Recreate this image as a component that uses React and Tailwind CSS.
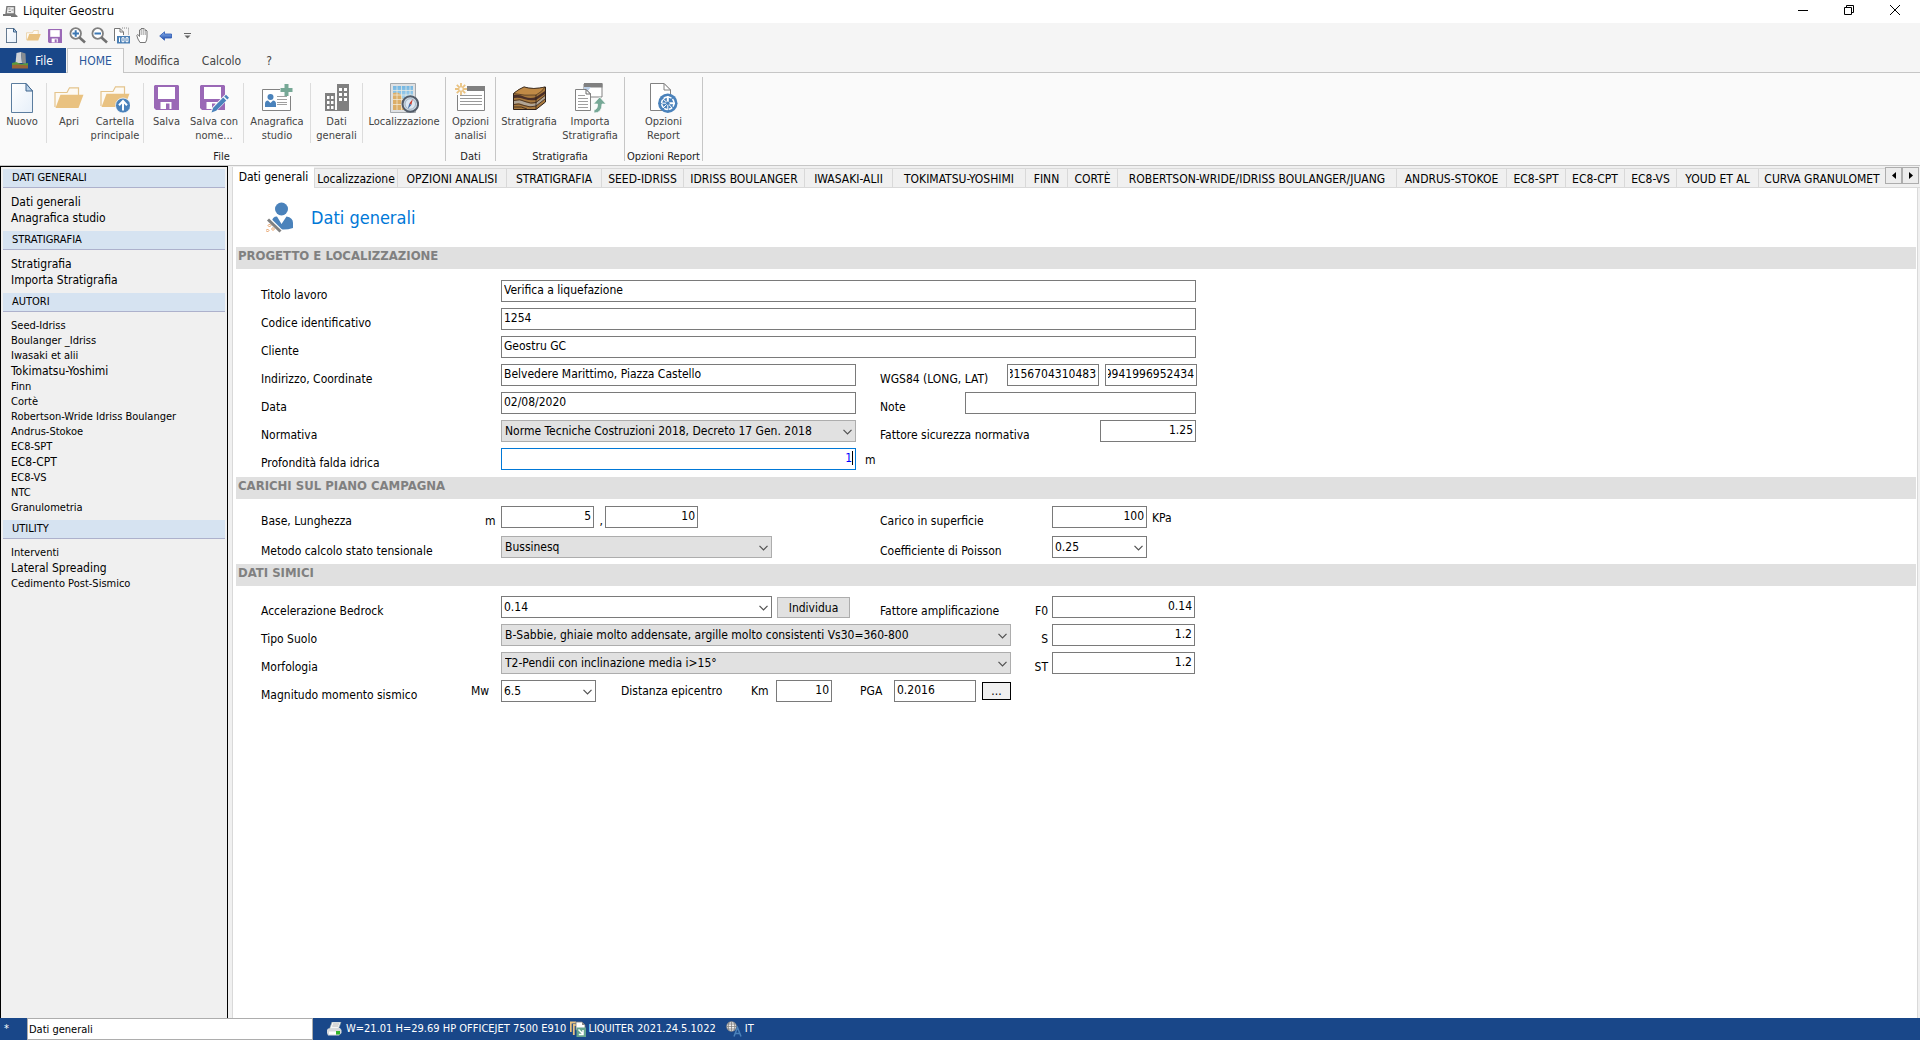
import React from 'react';

/* ---------- icons ---------- */

const PageIcon = ({ className, stroke = 1, edge = '#5b7d9f' }) => (
  <svg viewBox="0 0 22 30" className={className} aria-hidden="true">
    <defs>
      <linearGradient id="pg" x1="0" y1="0" x2="1" y2="1">
        <stop offset="0" stopColor="#ffffff" />
        <stop offset="1" stopColor="#e6eff9" />
      </linearGradient>
    </defs>
    <path d="M.5 .5H15L21.500 8V29.500H.5Z" fill="url(#pg)" stroke={edge} strokeWidth={stroke} />
    <path d="M15 .5V8H21.500Z" fill="#b9d2ea" stroke="#3f648c" strokeWidth={stroke} />
  </svg>
);

const FolderShape = () => (
  <>
    <path d="M1 20V5.500H13L15.500 .8H24.500V8" fill="#fdfaf4" stroke="#e4c48c" strokeWidth="1.200" />
    <path d="M1.500 21L6.500 7.800H29.500L24.500 21Z" fill="#e9c281" />
  </>
);

const FolderIcon = ({ className }) => (
  <svg viewBox="0 0 30 22" className={className} aria-hidden="true"><FolderShape /></svg>
);

const FolderUpIcon = () => (
  <svg viewBox="0 0 30 27" className="h-[27px] w-[30px]" aria-hidden="true">
    <FolderShape />
    <circle cx="23" cy="19.500" r="7.500" fill="#4a82bb" stroke="#fafafa" strokeWidth=".8" />
    <path d="M23 24.500V16M19 19.200L23 15L27 19.200" fill="none" stroke="#fff" strokeWidth="2" />
  </svg>
);

const DiskShape = () => (
  <>
    <path d="M1 0H24L25 1V25H2L0 23V1Z" fill="#9a68b6" />
    <path d="M4 2H21V14H4Z" fill="#fff" />
    <path d="M6.500 17H17.500V24H6.500Z" fill="#fff" />
    <path d="M12 18.500H15.500V24H12Z" fill="#9a68b6" />
  </>
);

const DiskIcon = ({ className }) => (
  <svg viewBox="0 0 25 25" className={className} aria-hidden="true"><DiskShape /></svg>
);

const DiskPenIcon = () => (
  <svg viewBox="0 0 29 28" className="h-[28px] w-[29px]" aria-hidden="true">
    <DiskShape />
    <path d="M10 28L12.500 22L25 9.500L29 13.500L16.500 26Z" fill="#fafafa" />
    <path d="M11.500 27.500L13.200 22.800L23.200 12.500L26.300 15.500L16.200 25.800Z" fill="#4a82bb" />
    <path d="M24.200 11.500L26 9.800L29 12.800L27.300 14.500Z" fill="#4a82bb" />
  </svg>
);

const CardIcon = () => (
  <svg viewBox="0 0 31 28" className="h-[28px] w-[31px]" aria-hidden="true">
    <path d="M.5 5.500H28.500V26.500H.5Z" fill="#fff" stroke="#828282" />
    <path d="M18 0H31V12H18Z" fill="#fafafa" />
    <circle cx="8.500" cy="13" r="3" fill="#4a82bb" />
    <path d="M3 23V20Q3 16.500 6 16.500L8.500 19L11 16.500Q14 16.500 14 20V23Z" fill="#4a82bb" />
    <path d="M15 12.500H25M15 15.500H25M15 18.500H25M15 20.500H25" stroke="#a0a0a0" />
    <path d="M22.500 0H26.500V4H30.500V8H26.500V12H22.500V8H18.500V4H22.500Z" fill="#76a896" />
  </svg>
);

const BuildingsIcon = () => (
  <svg viewBox="0 0 24 27" className="h-[27px] w-[24px]" aria-hidden="true">
    <path d="M0 9H10V27H0ZM12 0H24V27H12Z" fill="#808080" />
    <path d="M10 26H12V27H10Z" fill="#808080" />
    <path d="M2 12H4.500V15H2ZM6 12H8.500V15H6ZM2 17H4.500V20H2ZM6 17H8.500V20H6ZM2 22H4.500V25H2ZM6 22H8.500V25H6ZM14 4H17V7H14ZM19 4H22V7H19ZM14 9H17V12H14ZM19 9H22V12H19ZM14 14H17V17H14ZM19 14H22V17H19Z" fill="#fff" />
  </svg>
);

const MapIcon = () => (
  <svg viewBox="0 0 29 30" className="h-[30px] w-[29px]" aria-hidden="true">
    <defs>
      <linearGradient id="sky" x1="0" y1="0" x2="0" y2="1">
        <stop offset="0" stopColor="#74b6e2" />
        <stop offset="1" stopColor="#d4ecf8" />
      </linearGradient>
    </defs>
    <path d="M.5 .5H25.500V29.500H.5Z" fill="#dfe1e3" stroke="#a5a9ad" />
    <path d="M3 3H23V27H3Z" fill="url(#sky)" />
    <path d="M3 10Q10 8 12 14Q13 19 17 20L16 27H3Z" fill="#dcae68" />
    <path d="M7 3V27M11.500 3V27M16 3V27M20 3V27M3 7.500H23M3 12H23M3 16.500H23M3 21.500H23" stroke="#f4efe2" strokeWidth=".7" />
    <circle cx="20.300" cy="21" r="7.800" fill="#c9d6e2" stroke="#535c69" strokeWidth="2" />
    <circle cx="20.300" cy="21" r="5.200" fill="#dce8f2" stroke="#8d9cab" strokeWidth=".6" />
    <path d="M22.800 16L21.300 22L19.300 20.500Z" fill="#cf3c2c" />
    <path d="M17.800 26L19.300 20.500L21.300 22Z" fill="#456ea3" />
  </svg>
);

const OptionsIcon = () => (
  <svg viewBox="0 0 31 29" className="h-[29px] w-[31px]" aria-hidden="true">
    <path d="M2.500 5.500H29.500V27.500H2.500Z" fill="#fff" stroke="#828282" />
    <path d="M12 3H30V8H12Z" fill="#808080" />
    <path d="M0 0H12V12H0Z" fill="#fafafa" />
    <path d="M5 12.500H27M5 15.500H27M5 18.500H27M5 21.500H27" stroke="#9a9a9a" />
    <path d="M6 0V12M0 6H12M1.800 1.800L10.200 10.200M10.200 1.800L1.800 10.200" stroke="#e9c281" strokeWidth="1.800" />
    <circle cx="6" cy="6" r="2.200" fill="#fafafa" stroke="#e9c281" />
  </svg>
);

const StrataIcon = () => (
  <svg viewBox="0 0 33 24" className="h-[24px] w-[33px]" aria-hidden="true">
    <path d="M.5 7.500Q6 3 11 1Q20 4 32.500 1V16L23 23.500H.5Z" fill="#a8793d" stroke="#2e211a" />
    <path d="M.5 7.500Q6 3 11 1Q20 4 32 1Q29 6 23 9Q12 10 .5 7.500Z" fill="#c08a46" stroke="#2e211a" strokeWidth=".6" />
    <path d="M1 9Q6 8 12 11Q18 13 23 11L32 5V8L23 14Q17 15 11 13Q6 11 1 12Z" fill="#4a2f28" />
    <path d="M1 15Q7 13 12 16Q18 19 23 17L32 10V13L23 20Q17 21 11 19Q6 16 1 18Z" fill="#b0a596" />
    <path d="M1 14.500Q7 12.500 12 15.500Q18 18 23 16.500L32 9.500M1 18.500Q6 17 11 19.500Q17 22 23 20L32 13" fill="none" stroke="#3a2820" strokeWidth=".8" />
    <path d="M1 21Q9 20 14 23M23 9V23" fill="none" stroke="#2e211a" strokeWidth=".8" />
  </svg>
);

const ImportIcon = () => (
  <svg viewBox="0 0 31 31" className="h-[31px] w-[31px]" aria-hidden="true">
    <path d="M9 2H27V15H9Z" fill="#fff" stroke="#828282" />
    <path d="M9 1H27.500V5.500H9Z" fill="#808080" />
    <path d="M9 5H16L12 10H9Z" fill="#bcd0e8" />
    <path d="M.5 7.500H11L15.500 12V28.500H.5Z" fill="#fff" stroke="#828282" />
    <path d="M11 7.500V12H15.500Z" fill="#fff" stroke="#6a6a6a" />
    <path d="M3 13.500H10M3 16.500H13M3 19.500H13M3 22.500H13M3 25.500H13" stroke="#a0a0a0" />
    <path d="M19 31V28Q23 27 22.500 22H18.500L24.700 15L31 22H27Q27 31 19 31Z" fill="#76a896" stroke="#fafafa" strokeWidth=".7" />
  </svg>
);

const ReportIcon = () => (
  <svg viewBox="0 0 28 30" className="h-[30px] w-[28px]" aria-hidden="true">
    <path d="M.5 .5H14L20.500 7V27.500H.5Z" fill="#fff" stroke="#828282" />
    <path d="M14 .5V7H20.500Z" fill="#fff" stroke="#828282" />
    <circle cx="17.800" cy="20.200" r="9.700" fill="#4a82bb" />
    <circle cx="17.800" cy="20.200" r="6.200" fill="none" stroke="#fff" strokeWidth="1.500" strokeDasharray="3.600 1.200" />
    <path d="M17.800 13V20.200H25" fill="none" stroke="#fff" strokeWidth="2" />
    <path d="M17.800 20.200L13 25M17.800 20.200L22 25M17.800 20.200H11.500M17.800 20.200V27M17.800 20.200L13 16" stroke="#fff" strokeWidth="1" />
    <circle cx="17.800" cy="20.200" r="1.800" fill="#4a82bb" />
  </svg>
);

const ZoomIcon = ({ plus }) => (
  <svg viewBox="0 0 17 17" className="h-[17px] w-[17px]" aria-hidden="true">
    <circle cx="6.700" cy="6.500" r="5.300" fill="#fff" stroke="#808080" strokeWidth="1.800" />
    <path d="M10.500 10.500L16 15.500" stroke="#707070" strokeWidth="2.600" />
    <path d={plus ? 'M3.500 6.500H10M6.700 3.300V9.700' : 'M3.500 6.500H10'} stroke="#3d78b4" strokeWidth="2" />
  </svg>
);

const HundredIcon = () => (
  <svg viewBox="0 0 17 17" className="h-[17px] w-[17px]" aria-hidden="true">
    <path d="M1.500 14V1.500H7L10.500 5V8" fill="#fff" stroke="#777" />
    <path d="M7 1.500V5H10.500" fill="none" stroke="#777" />
    <path d="M9 1H15.500V8" fill="none" stroke="#888" strokeDasharray="1 1" />
    <path d="M4 9H17V16.500H4Z" fill="#4a7fb5" />
    <path d="M6.500 10.500V15M9 10.700H11V14.700H9ZM13 10.700H15V14.700H13Z" fill="none" stroke="#fff" />
  </svg>
);

const HandIcon = () => (
  <svg viewBox="0 0 14 17" className="h-[17px] w-[14px]" aria-hidden="true">
    <path d="M4 15.500Q1.500 12 .8 8.500Q1.200 7 2.500 8L3.500 9.500V3Q4.200 1.800 5 3V2Q6 0 7 2V1.800Q8 .5 9 2.500V3.500Q10 2.200 11 4V10Q11 13 9.500 15.500Z" fill="#fff" stroke="#777" />
    <path d="M5.200 3V8M7.200 2V8M9.200 3.500V8" stroke="#888" strokeWidth=".8" />
  </svg>
);

const BackIcon = () => (
  <svg viewBox="0 0 13 10" className="h-[10px] w-[13px]" aria-hidden="true">
    <defs>
      <linearGradient id="bk" x1="0" y1="0" x2="0" y2="1">
        <stop offset="0" stopColor="#8fb8f2" />
        <stop offset="1" stopColor="#1c48a8" />
      </linearGradient>
    </defs>
    <path d="M.7 5L5.500 .8V3H12.500V7H5.500V9.200Z" fill="url(#bk)" stroke="#2c59b4" strokeWidth=".8" />
  </svg>
);

const AppIcon = () => (
  <svg viewBox="0 0 15 11" className="h-[11px] w-[15px]" aria-hidden="true">
    <path d="M4 .5H11.500V8H3Z" fill="#eee" stroke="#777" strokeWidth="1.400" />
    <path d="M5.500 3H7.500M8.500 4H10.500M5.500 5.500H8" stroke="#888" />
    <path d="M0 8H12L14.500 10V11H8V10H0Z" fill="#777" />
  </svg>
);

const FileIcon = () => (
  <svg viewBox="0 0 16 17" className="h-[17px] w-[16px]" aria-hidden="true">
    <path d="M4.500 1L9 0L10 11H3.500Z" fill="#d0d3d6" />
    <path d="M9 0L13.500 1.500L14 12L10 11Z" fill="#868c92" />
    <path d="M0 11L4 10L9 12L16 11V14H0Z" fill="#5c9a3d" />
    <path d="M0 13L6 12.500L16 13.500V16.500H0Z" fill="#9a6538" />
  </svg>
);

const UserWandIcon = () => (
  <svg viewBox="0 0 28 31" className="h-[31px] w-[28px]" aria-hidden="true">
    <circle cx="15.500" cy="7" r="6.500" fill="#4a82bb" />
    <path d="M6 25V20Q6 14.500 11 14.500L15.500 22L20.500 14.500Q27 15.500 27 21V26Q21 28 15.500 27.500Z" fill="#4a82bb" />
    <path d="M2 17L15 30" stroke="#fff" strokeWidth="5" />
    <path d="M2 17.500L14.500 29.500" stroke="#808080" strokeWidth="3" />
    <path d="M3.500 22L5 23.500L3.500 25L2 23.500ZM7 25.500L8.500 27L7 28.500L5.500 27ZM1.500 27L3 28.500L1.500 30L0 28.500Z" fill="#fff" stroke="#e0863c" strokeWidth=".8" />
  </svg>
);

const PrinterIcon = () => (
  <svg viewBox="0 0 15 14" className="h-[14px] w-[15px]" aria-hidden="true">
    <path d="M5 0H14L11.500 7H2.500Z" fill="#f6f6f6" stroke="#9aa" strokeWidth=".6" />
    <path d="M6 2H12M5.300 4H11.300" stroke="#aaa" strokeWidth=".8" />
    <path d="M1 6.500L13 6L14.500 8V11L12 13.500H1L0 11V8Z" fill="#d8dadc" />
    <path d="M2 9.500H9V12.500H2Z" fill="#fff" />
    <path d="M9 9H13V12.500H9Z" fill="#35b52c" />
  </svg>
);

const VersionIcon = () => (
  <svg viewBox="0 0 16 16" className="h-[16px] w-[16px]" aria-hidden="true">
    <path d="M.8 11V1.500H6M3.800 14V4H8" fill="none" stroke="#e9c281" strokeWidth="1.800" />
    <path d="M6 1H12L15 4V9H6Z" fill="#fff" stroke="#777" strokeWidth=".8" />
    <path d="M12 1V4H15Z" fill="#888" />
    <path d="M6.500 6.500H16V16H6.500Z" fill="#66a58f" />
    <path d="M8.500 8.500L13 13M13 9V13.500H8.800" fill="none" stroke="#fff" strokeWidth="1.500" />
  </svg>
);

const GlobeIcon = () => (
  <svg viewBox="0 0 16 16" className="h-[16px] w-[16px]" aria-hidden="true">
    <circle cx="5.500" cy="5.500" r="4.800" fill="#f0f0f0" stroke="#888" strokeWidth=".8" />
    <path d="M5.500 .5V10.500M.5 5.500H10.500M1.500 3H9.500M1.500 8H9.500M3 1Q1.500 5.500 3 10M8 1Q9.500 5.500 8 10" fill="none" stroke="#777" strokeWidth=".7" />
    <path d="M8 15.500L11.500 6.500L15 15.500M9.500 12.500H13.500" fill="none" stroke="#4a82bb" strokeWidth="1.500" />
  </svg>
);

/* ---------- ribbon ---------- */

const QUICK = [
  ['Nuovo', <PageIcon className="h-[15px] w-[11px]" stroke={2} edge="#34506e" />],
  ['Apri', <FolderIcon className="h-[11px] w-[15px]" />],
  ['Salva', <DiskIcon className="h-[14px] w-[14px]" />],
  ['Zoom avanti', <ZoomIcon plus />],
  ['Zoom indietro', <ZoomIcon />],
  ['Zoom 100', <HundredIcon />],
  ['Sposta', <HandIcon />],
  ['Indietro', <BackIcon />],
];

const RibbonButton = ({ icon, lines, width }) => (
  <button type="button" className={`flex flex-col items-center text-[11px] leading-[14px] text-[#444] ${width}`}>
    <span className="flex h-[35px] items-center justify-center">{icon}</span>
    {lines.map((l) => <span key={l} className="whitespace-nowrap">{l}</span>)}
  </button>
);

const Divider = () => <span className="mx-[2px] mt-[3px] h-[60px] w-px shrink-0 bg-[#dcdcdc]" />;

const RibbonGroup = ({ title, children, className = '' }) => (
  <section className={`flex shrink-0 flex-col border-r border-[#c6c6c6] pt-[3px] ${className}`}>
    <div className="flex h-[70px] shrink-0 items-start">{children}</div>
    <h2 className="text-center text-[11px] leading-[14px] whitespace-nowrap text-[#222]">{title}</h2>
  </section>
);

/* ---------- sidebar ---------- */

const NAV = [
  ['DATI GENERALI', [['Dati generali', 1], ['Anagrafica studio', 1]]],
  ['STRATIGRAFIA', [['Stratigrafia', 1], ['Importa Stratigrafia', 1]]],
  ['AUTORI', [
    ['Seed-Idriss'], ['Boulanger _Idriss'], ['Iwasaki et alii'], ['Tokimatsu-Yoshimi', 1], ['Finn'], ['Cortè'],
    ['Robertson-Wride Idriss Boulanger'], ['Andrus-Stokoe'], ['EC8-SPT'], ['EC8-CPT', 1], ['EC8-VS'], ['NTC'], ['Granulometria'],
  ]],
  ['UTILITY', [['Interventi'], ['Lateral Spreading', 1], ['Cedimento Post-Sismico']]],
];

/* ---------- tabs ---------- */

const TABS = [
  ['Localizzazione', 'w-[83px]'],
  ['OPZIONI ANALISI', 'w-[109px]'],
  ['STRATIGRAFIA', 'w-[95px]'],
  ['SEED-IDRISS', 'w-[82px]'],
  ['IDRISS BOULANGER', 'w-[121px]'],
  ['IWASAKI-ALII', 'w-[88px]'],
  ['TOKIMATSU-YOSHIMI', 'w-[133px]'],
  ['FINN', 'w-[42px]'],
  ['CORTÈ', 'w-[50px]'],
  ['ROBERTSON-WRIDE/IDRISS BOULANGER/JUANG', 'w-[279px]'],
  ['ANDRUS-STOKOE', 'w-[110px]'],
  ['EC8-SPT', 'w-[59px]'],
  ['EC8-CPT', 'w-[59px]'],
  ['EC8-VS', 'w-[52px]'],
  ['YOUD ET AL', 'w-[82px]'],
  ['CURVA GRANULOMET', 'min-w-[120px] flex-1'],
];

/* ---------- form parts ---------- */

const Row = ({ children, className = '' }) => (
  <div className={`flex h-[22px] items-start ${className}`}>{children}</div>
);

const Label = ({ id, children, className = '' }) => (
  <label htmlFor={id} className={`shrink-0 pt-[7px] leading-4 whitespace-nowrap ${className}`}>{children}</label>
);

const Field = ({ id, value, className = '', ...rest }) => (
  <input
    id={id}
    type="text"
    defaultValue={value}
    className={`h-[22px] shrink-0 border border-[#7a7a7a] bg-white px-[2px] pb-[2px] outline-none ${className}`}
    {...rest}
  />
);

const Select = ({ id, value, width, editable, label }) => (
  <span className={`relative block h-[22px] shrink-0 ${width}`}>
    <select
      id={id}
      aria-label={label}
      defaultValue={value}
      className={`h-full w-full appearance-none border pb-px outline-none ${editable ? 'border-[#7a7a7a] bg-white pl-[2px]' : 'border-[#adadad] bg-[#e1e1e1] pl-[3px]'}`}
    >
      <option>{value}</option>
    </select>
    <svg viewBox="0 0 9 6" className="pointer-events-none absolute top-[9px] right-[4px] h-[6px] w-[9px]" aria-hidden="true">
      <path d="M.5 .8L4.500 4.800L8.500 .8" fill="none" stroke="#505050" strokeWidth="1.200" />
    </svg>
  </span>
);

const SectionTitle = ({ children, className = '' }) => (
  <h2 className={`mr-px ml-[3px] h-[22px] bg-[#e0e0e0] pl-[2px] text-[13px] leading-[17px] font-bold text-[#808080] ${className}`}>{children}</h2>
);

export default function App() {
  return (
    <div className="flex h-screen flex-col overflow-hidden bg-[#f0f0f0] font-['DejaVu_Sans_Condensed','DejaVu_Sans',sans-serif] text-[12px] text-black">
      <header className="flex h-[23px] shrink-0 items-start justify-between bg-white font-['Open_Sans',sans-serif]">
        <div className="flex items-center gap-1 pt-[2px] pl-[3px] leading-[18px]">
          <AppIcon />
          <h1 className="pl-px text-[12px]">Liquiter Geostru</h1>
        </div>
        <div className="flex pr-[2px]">
          <button type="button" aria-label="Riduci" className="flex h-5 w-[46px] items-center justify-center">
            <svg viewBox="0 0 10 10" className="h-[10px] w-[10px]"><path d="M0 5.500H10" stroke="#000" /></svg>
          </button>
          <button type="button" aria-label="Ripristina" className="flex h-5 w-[46px] items-center justify-center">
            <svg viewBox="0 0 10 10" className="h-[10px] w-[10px]"><path d="M.5 2.500H7.500V9.500H.5ZM2.500 2.500V.5H9.500V7.500H7.500" fill="none" stroke="#000" /></svg>
          </button>
          <button type="button" aria-label="Chiudi" className="flex h-5 w-[46px] items-center justify-center">
            <svg viewBox="0 0 10 10" className="h-[10px] w-[10px]"><path d="M0 0L10 10M10 0L0 10" stroke="#000" /></svg>
          </button>
        </div>
      </header>

      <div className="flex h-[25px] shrink-0 items-center bg-[#f5f5f5]">
        {QUICK.map(([name, icon]) => (
          <button key={name} type="button" aria-label={name} className="flex h-[22px] w-[22px] items-center justify-center">{icon}</button>
        ))}
        <button type="button" aria-label="Personalizza" className="flex h-[22px] w-[22px] items-center justify-center">
          <svg viewBox="0 0 7 6" className="h-[6px] w-[7px]"><path d="M0 .5H7" stroke="#666" /><path d="M.5 2.500H6.500L3.500 5.500Z" fill="#666" /></svg>
        </button>
      </div>

      <nav className="flex h-[25px] shrink-0 border-b border-[#c6c6c6] bg-[#f5f5f5] text-[#444]">
        <button type="button" className="-mb-px flex w-[66px] items-center gap-[7px] bg-[#194789] pl-3 text-white"><FileIcon />File</button>
        <button type="button" className="-mb-px ml-px w-[57px] border border-b-0 border-[#c6c6c6] bg-[#fafafa] text-[#2a579a]">HOME</button>
        <button type="button" className="w-[66px] pt-px">Modifica</button>
        <button type="button" className="w-[63px] pt-px">Calcolo</button>
        <button type="button" className="w-8 pt-px">?</button>
      </nav>

      <div className="flex h-[93px] shrink-0 border-b border-[#c6c6c6] bg-[#fafafa] pt-1 pb-1">
        <RibbonGroup title="File" className="pr-[2px]">
          <RibbonButton width="w-11" icon={<PageIcon className="h-[30px] w-[22px]" />} lines={['Nuovo']} />
          <Divider />
          <RibbonButton width="w-[40px]" icon={<FolderIcon className="h-[22px] w-[30px]" />} lines={['Apri']} />
          <RibbonButton width="w-[52px]" icon={<span className="pt-1"><FolderUpIcon /></span>} lines={['Cartella', 'principale']} />
          <Divider />
          <RibbonButton width="w-[41px]" icon={<DiskIcon className="h-[25px] w-[25px]" />} lines={['Salva']} />
          <RibbonButton width="w-[54px]" icon={<span className="pt-[3px]"><DiskPenIcon /></span>} lines={['Salva con', 'nome...']} />
          <Divider />
          <RibbonButton width="w-[62px]" icon={<CardIcon />} lines={['Anagrafica', 'studio']} />
          <Divider />
          <RibbonButton width="w-[47px]" icon={<BuildingsIcon />} lines={['Dati', 'generali']} />
          <Divider />
          <RibbonButton width="w-[78px]" icon={<MapIcon />} lines={['Localizzazione']} />
        </RibbonGroup>
        <RibbonGroup title="Dati" className="w-[50px]">
          <RibbonButton width="w-full" icon={<OptionsIcon />} lines={['Opzioni', 'analisi']} />
        </RibbonGroup>
        <RibbonGroup title="Stratigrafia" className="w-[129px]">
          <RibbonButton width="w-[66px]" icon={<StrataIcon />} lines={['Stratigrafia']} />
          <RibbonButton width="w-[56px]" icon={<ImportIcon />} lines={['Importa', 'Stratigrafia']} />
        </RibbonGroup>
        <RibbonGroup title="Opzioni Report" className="w-[78px]">
          <RibbonButton width="w-full" icon={<ReportIcon />} lines={['Opzioni', 'Report']} />
        </RibbonGroup>
      </div>

      <div className="flex min-h-0 flex-1">
        <aside className="w-[228px] shrink-0 border-x border-t border-black px-[2px] pt-[2px]">
          {NAV.map(([title, items]) => (
            <section key={title}>
              <h2 className="h-[19px] border-b border-[#adb1cc] bg-[#d6e3f1] pl-[9px] text-[11px] leading-[18px]">{title}</h2>
              <ul className="pt-1.5 pb-[5px] pl-2">
                {items.map(([name, large]) => (
                  <li key={name} className={large ? 'text-[12px] leading-4' : 'text-[11px] leading-[15px]'}>
                    <a href="#pagina">{name}</a>
                  </li>
                ))}
              </ul>
            </section>
          ))}
        </aside>

        <main id="pagina" className="ml-1 flex min-w-0 flex-1 flex-col">
          <div className="flex h-[22px] shrink-0 items-end">
            <div role="tablist" className="flex min-w-0 flex-1 items-end overflow-hidden">
              <button type="button" role="tab" aria-selected="true" className="h-[21px] w-[82px] shrink-0 border-l border-[#d9d9d9] bg-white pb-[2px] text-center whitespace-nowrap">Dati generali</button>
              {TABS.map(([name, width]) => (
                <button key={name} type="button" role="tab" aria-selected="false" className={`h-[20px] shrink-0 border-t border-b border-l border-[#d9d9d9] pt-px text-center whitespace-nowrap ${width}`}>{name}</button>
              ))}
            </div>
            <div className="flex h-full shrink-0 items-start border-b border-[#d9d9d9] pt-px pr-px">
              <button type="button" aria-label="Schede precedenti" className="flex h-[17px] w-[17px] items-center justify-center border border-[#adadad] bg-[#ececec]">
                <svg viewBox="0 0 4 7" className="h-[7px] w-[4px]"><path d="M4 0V7L0 3.500Z" /></svg>
              </button>
              <button type="button" aria-label="Schede successive" className="flex h-[17px] w-[17px] items-center justify-center border border-[#adadad] bg-[#ececec]">
                <svg viewBox="0 0 4 7" className="h-[7px] w-[4px]"><path d="M0 0V7L4 3.500Z" /></svg>
              </button>
            </div>
          </div>

          <form className="mr-[2px] flex-1 border-x border-[#d9d9d9] bg-white" onSubmit={(e) => e.preventDefault()}>
            <div className="flex h-[59px] items-center gap-[17px] pl-[33px]">
              <UserWandIcon />
              <h2 className="text-[18px] text-[#0078d7]">Dati generali</h2>
            </div>

            <SectionTitle>PROGETTO E LOCALIZZAZIONE</SectionTitle>
            <div className="flex w-[965px] flex-col gap-1.5 pt-[11px] pb-[7px] pl-7">
              <Row>
                <Label id="titolo" className="w-60">Titolo lavoro</Label>
                <Field id="titolo" value="Verifica a liquefazione" className="w-[695px]" />
              </Row>
              <Row>
                <Label id="codice" className="w-60">Codice identificativo</Label>
                <Field id="codice" value="1254" className="w-[695px]" />
              </Row>
              <Row>
                <Label id="cliente" className="w-60">Cliente</Label>
                <Field id="cliente" value="Geostru GC" className="w-[695px]" />
              </Row>
              <Row>
                <Label id="indirizzo" className="w-60">Indirizzo, Coordinate</Label>
                <Field id="indirizzo" value="Belvedere Marittimo, Piazza Castello" className="w-[355px]" />
                <Label id="lon" className="ml-6 w-[127px]">WGS84 (LONG, LAT)</Label>
                <Field id="lon" value="3156704310483" dir="rtl" className="w-[92px]" />
                <Field id="lat" value="9941996952434" dir="rtl" aria-label="LAT" className="ml-1.5 w-[92px]" />
              </Row>
              <Row>
                <Label id="data" className="w-60">Data</Label>
                <Field id="data" value="02/08/2020" className="w-[355px]" />
                <Label id="note" className="ml-6 w-[85px]">Note</Label>
                <Field id="note" value="" className="w-[231px]" />
              </Row>
              <Row>
                <Label id="normativa" className="w-60">Normativa</Label>
                <Select id="normativa" value="Norme Tecniche Costruzioni 2018, Decreto 17 Gen. 2018" width="w-[355px]" />
                <Label id="fs" className="ml-6 w-[220px]">Fattore sicurezza normativa</Label>
                <Field id="fs" value="1.25" className="w-24 text-right" />
              </Row>
              <Row>
                <Label id="falda" className="w-60">Profondità falda idrica</Label>
                <span className="relative">
                  <Field id="falda" value="1" className="w-[355px] border-[#0078d7] pr-[3px] text-right text-[#0000ff]" />
                  <span className="absolute top-[3px] right-[3px] h-[14px] w-px bg-black" />
                </span>
                <span className="pt-1 pl-[9px] leading-4">m</span>
              </Row>
            </div>

            <SectionTitle>CARICHI SUL PIANO CAMPAGNA</SectionTitle>
            <div className="flex w-[965px] flex-col gap-2 pt-[7px] pb-1.5 pl-7">
              <Row>
                <Label id="base" className="w-[224px]">Base, Lunghezza</Label>
                <span className="w-4 pt-[7px] leading-4">m</span>
                <Field id="base" value="5" className="w-[93px] text-right" />
                <span className="w-[11px] pt-[7px] pr-[2px] text-right leading-4">,</span>
                <Field id="lunghezza" value="10" aria-label="Lunghezza" className="w-[93px] text-right" />
                <Label id="carico" className="ml-auto w-[172px]">Carico in superficie</Label>
                <Field id="carico" value="100" className="w-[95px] text-right" />
                <span className="w-[51px] pt-1 pl-[5px] leading-4">KPa</span>
              </Row>
              <Row>
                <Label id="metodo" className="w-60">Metodo calcolo stato tensionale</Label>
                <Select id="metodo" value="Bussinesq" width="w-[271px]" />
                <Label id="poisson" className="ml-auto w-[172px]">Coefficiente di Poisson</Label>
                <Select id="poisson" value="0.25" width="w-[95px]" editable />
                <span className="w-[51px]" />
              </Row>
            </div>

            <SectionTitle>DATI SIMICI</SectionTitle>
            <div className="flex w-[965px] flex-col gap-1.5 pt-2.5 pl-7">
              <Row>
                <Label id="acc" className="w-60">Accelerazione Bedrock</Label>
                <Select id="acc" value="0.14" width="w-[271px]" editable />
                <button type="button" className="mt-px ml-[5px] h-[21px] w-[73px] border border-[#adadad] bg-[#e1e1e1]">Individua</button>
                <span className="ml-[30px] pt-[7px] leading-4">Fattore amplificazione</span>
                <Label id="f0" className="ml-auto w-10 pr-1 text-right">F0</Label>
                <Field id="f0" value="0.14" className="mr-[3px] w-[143px] text-right" />
              </Row>
              <Row>
                <Label id="suolo" className="w-60">Tipo Suolo</Label>
                <Select id="suolo" value="B-Sabbie, ghiaie molto addensate, argille molto consistenti Vs30=360-800" width="w-[510px]" />
                <Label id="s" className="ml-auto w-10 pr-1 text-right">S</Label>
                <Field id="s" value="1.2" className="mr-[3px] w-[143px] text-right" />
              </Row>
              <Row>
                <Label id="morf" className="w-60">Morfologia</Label>
                <Select id="morf" value="T2-Pendii con inclinazione media i>15°" width="w-[510px]" />
                <Label id="st" className="ml-auto w-10 pr-1 text-right">ST</Label>
                <Field id="st" value="1.2" className="mr-[3px] w-[143px] text-right" />
              </Row>
              <Row>
                <span className="w-[210px] pt-[7px] leading-4">Magnitudo momento sismico</span>
                <label htmlFor="mw" className="w-[30px] pt-[3px] leading-4">Mw</label>
                <Select id="mw" value="6.5" width="w-[95px]" editable />
                <span className="ml-[25px] w-[130px] pt-[3px] leading-4">Distanza epicentro</span>
                <label htmlFor="km" className="w-[25px] pt-[3px] leading-4">Km</label>
                <Field id="km" value="10" className="w-14 text-right" />
                <label htmlFor="pga" className="ml-7 w-[34px] pt-[3px] leading-4">PGA</label>
                <Field id="pga" value="0.2016" className="w-[82px]" />
                <button type="button" aria-label="Calcola PGA" className="mt-[2px] ml-1.5 h-[18px] w-[29px] border border-black bg-[#f0f0f0] leading-3">...</button>
              </Row>
            </div>
          </form>
        </main>
      </div>

      <footer className="flex h-[22px] shrink-0 items-center bg-[#194789] text-[11px] text-white">
        <span className="w-[27px] pl-1">*</span>
        <input aria-label="Pagina" defaultValue="Dati generali" className="h-full w-[286px] border border-[#adadad] bg-white px-px text-black outline-none" />
        <span className="ml-3.5 flex items-center gap-1 whitespace-nowrap"><PrinterIcon />W=21.01 H=29.69 HP OFFICEJET 7500 E910</span>
        <span className="ml-1 flex items-center gap-[2px] whitespace-nowrap"><VersionIcon />LIQUITER 2021.24.5.1022</span>
        <span className="ml-2.5 flex items-center gap-[3px]"><GlobeIcon />IT</span>
      </footer>
    </div>
  );
}
